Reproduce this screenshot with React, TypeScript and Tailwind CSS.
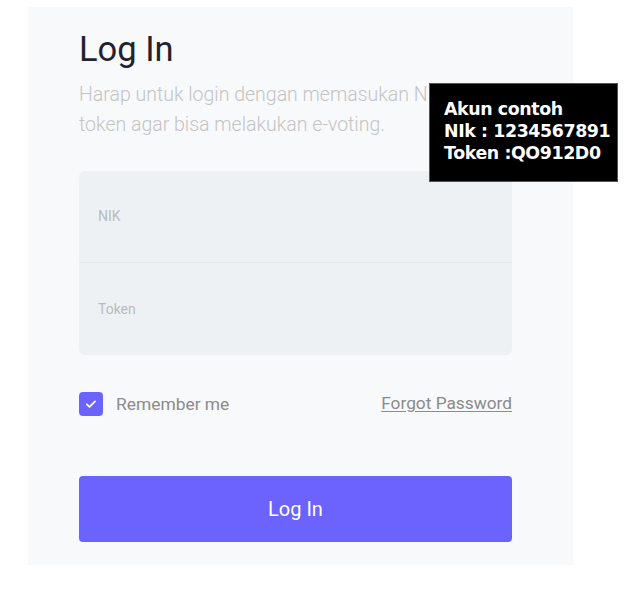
import React from 'react'

const Field = ({ label, last }: { label: string; last?: boolean }) => (
    <div className={`h-[92px] flex items-center px-[19px] ${last ? '' : 'border-b border-[#e3e8ec]'}`}>
        <span className="text-[14px] text-[#b9bcbf]">{label}</span>
    </div>
)

export default function App() {
    return (
        <div className="relative min-h-[604px] bg-white font-['Roboto',sans-serif]">
            <div className="pt-[7px] pl-[28px]">
                <div className="w-[545px] h-[558px] bg-[#f8f9fb] pl-[51px] pr-[61px] pt-[23px]">
                    <h1 className="text-[34.5px] leading-[38px] text-[#1f2330]">Log In</h1>
                    <p className="mt-[12px] text-[19.5px] leading-[30px] text-[#c4c4c4] font-light">
                        Harap untuk login dengan memasukan NIK dan token agar bisa melakukan e-voting.
                    </p>
                    <div className="mt-[31px] rounded-[6px] bg-[#edf1f4]">
                        <Field label="NIK" />
                        <Field label="Token" last />
                    </div>
                    <div className="mt-[36px] flex items-center justify-between">
                        <label className="flex items-center gap-[13px]">
                            <span className="w-[24px] h-[24px] rounded-[4px] bg-[#6c63ff] flex items-center justify-center">
                                <svg width="14" height="14" viewBox="0 0 24 24" fill="none" stroke="white" strokeWidth="3" strokeLinecap="round" strokeLinejoin="round">
                                    <path d="M5 12.5l4.5 4.5L19 7.5" />
                                </svg>
                            </span>
                            <span className="text-[17.4px] text-[#8b8b8b]">Remember me</span>
                        </label>
                        <a className="text-[17.3px] text-[#8b8b8b] underline underline-offset-2">Forgot Password</a>
                    </div>
                    <button className="mt-[59px] w-full h-[66px] rounded-[4px] bg-[#6c63ff] text-white text-[20px]">
                        Log In
                    </button>
                </div>
            </div>
            <div className="absolute left-[429px] top-[83px] w-[189px] h-[99px] bg-black border border-[#555] pl-[14px] pt-[14px] font-['DejaVu_Sans',sans-serif] font-bold text-white text-[17.4px] leading-[22px] tracking-[-0.4px]">
                <div>Akun contoh</div>
                <div>NIk : 1234567891</div>
                <div>Token :QO912D0</div>
            </div>
        </div>
    )
}
